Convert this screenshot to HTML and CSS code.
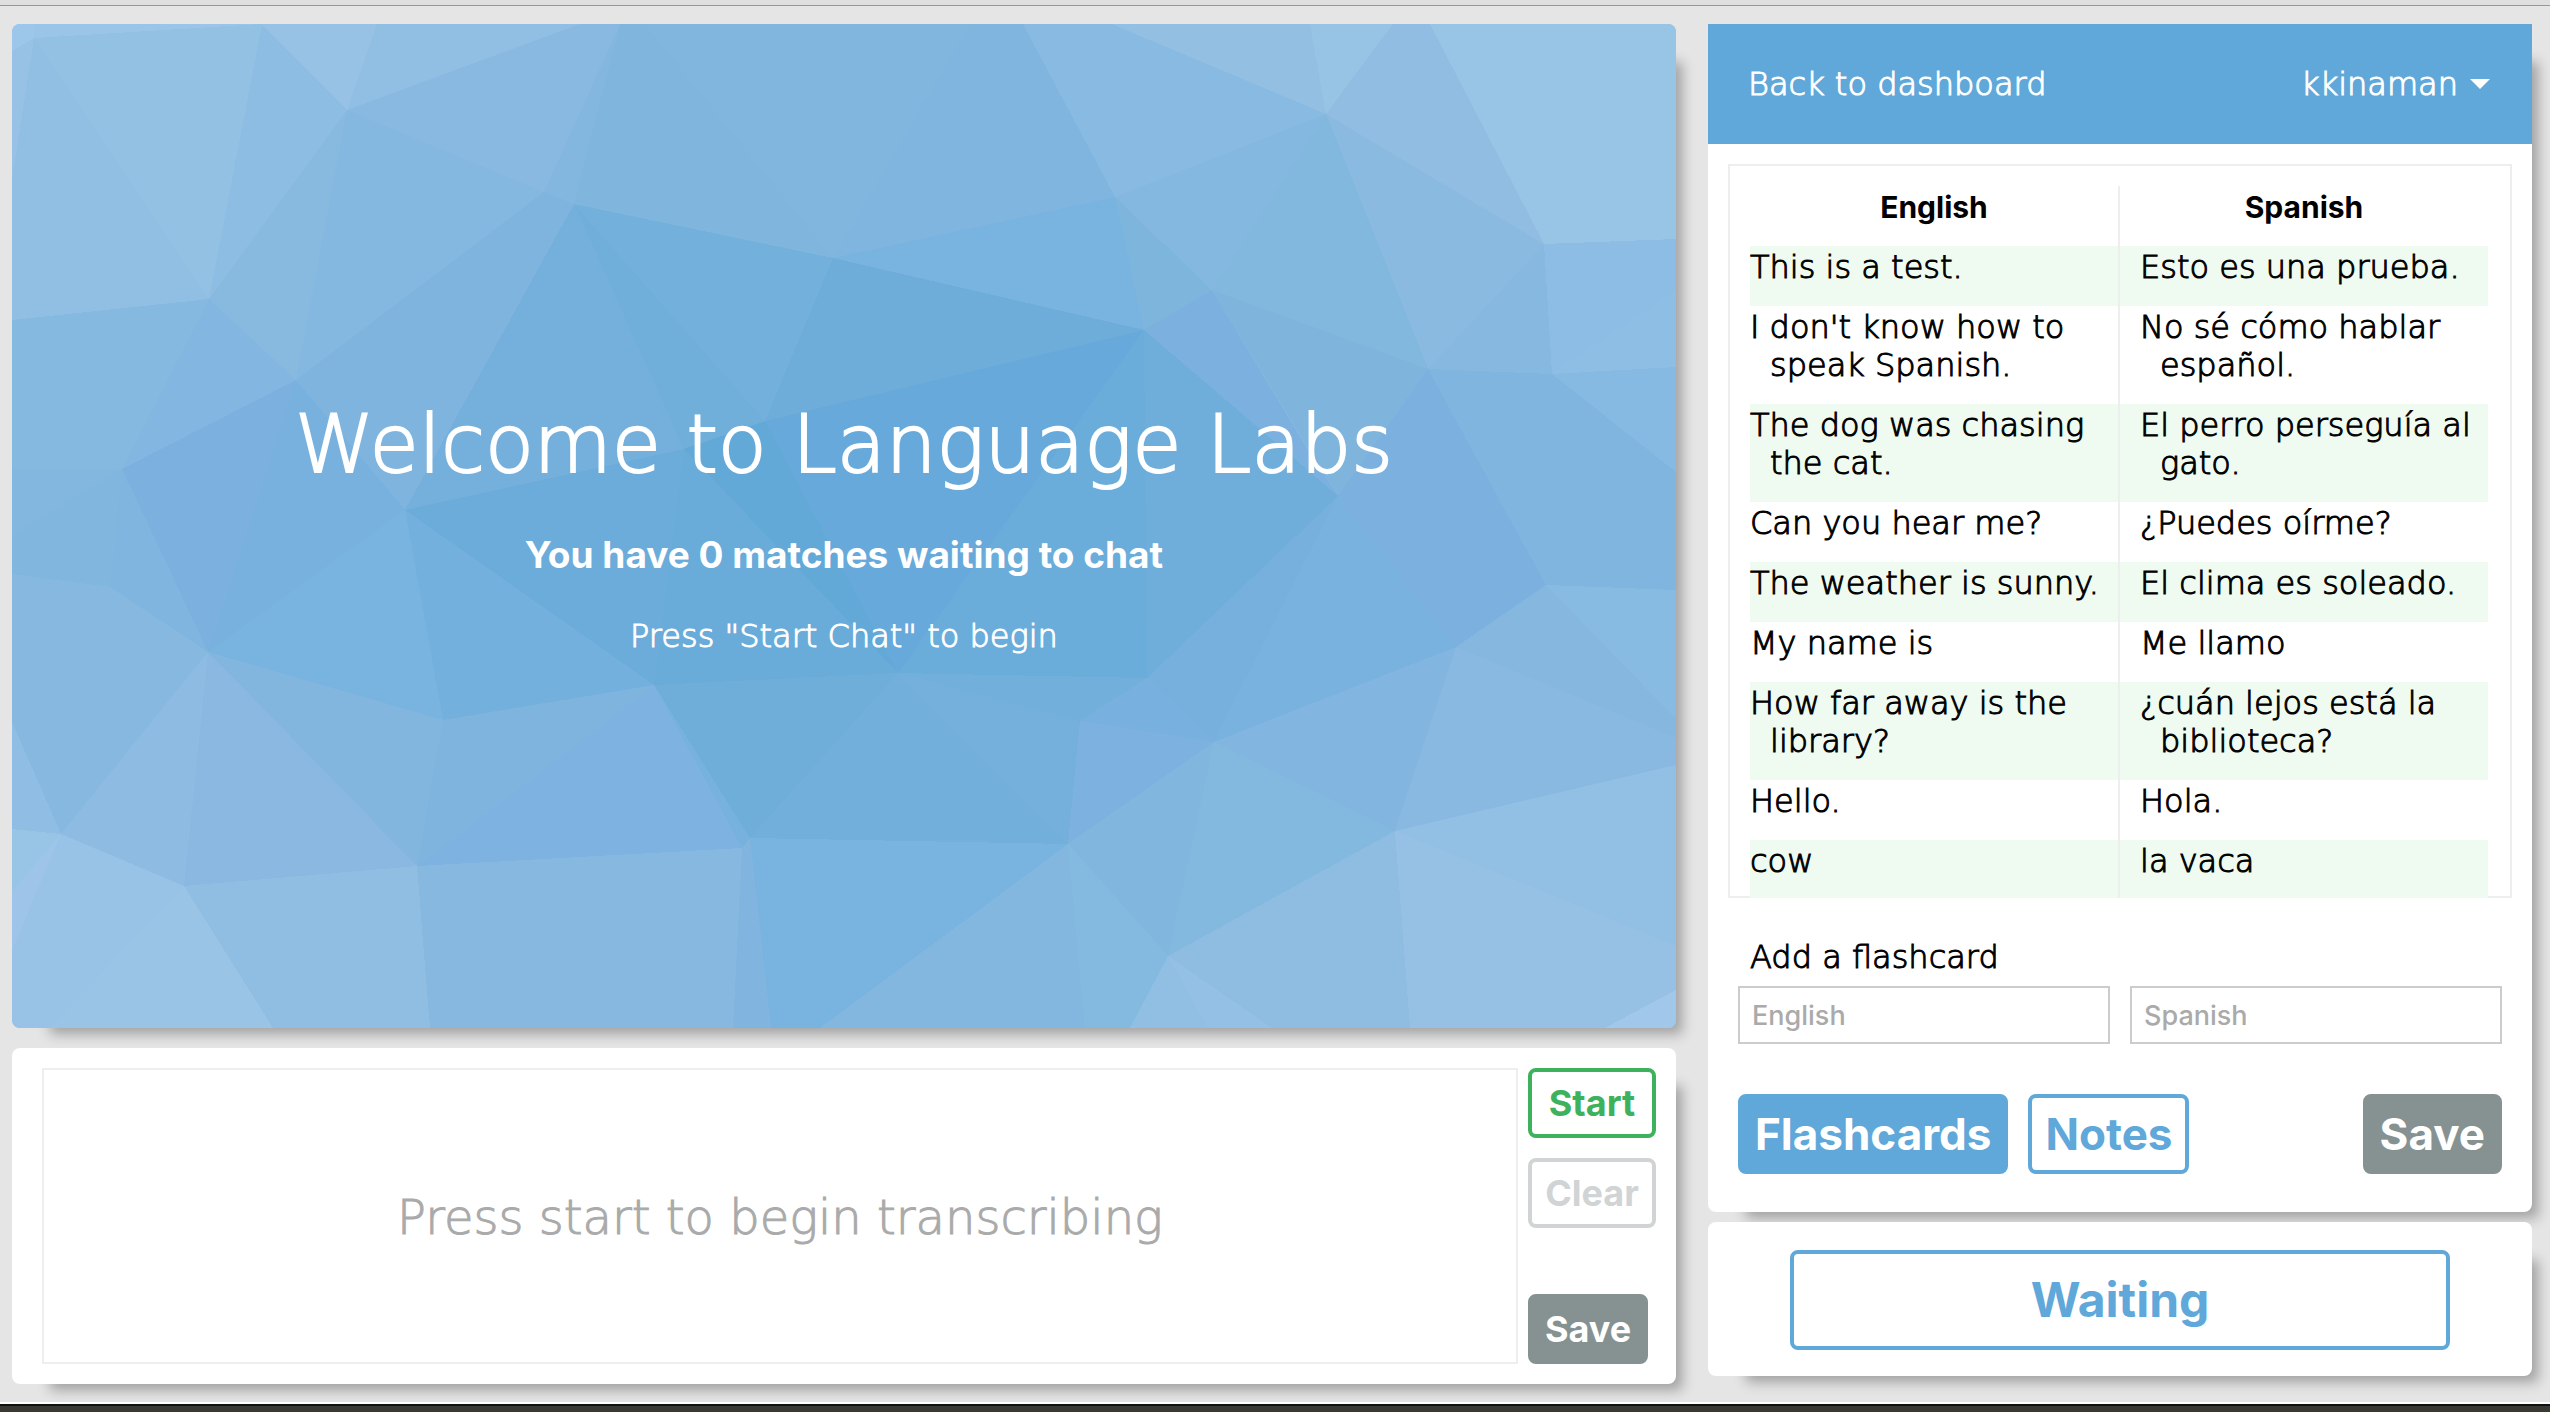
FILE: index.html
```html
<!DOCTYPE html>
<html lang="en">
<head>
<meta charset="utf-8">
<title>Language Labs</title>
<link rel="stylesheet" href="styles.css">
</head>
<body>
<div class="window">
  <div class="toolbar-edge"></div>
  <main class="layout">
    <div class="column column-left">
      <section class="card video">
        <svg class="mosaic" viewBox="12 24 1664 1004" preserveAspectRatio="none" aria-hidden="true" shape-rendering="crispEdges">
          <rect x="12" y="24" width="1664" height="1004" fill="#84b7df"/>
          <polygon fill="#9dc6eb" points="12,24 34,24 34,38 12,51"/>
          <polygon fill="#9ac4e8" points="34,24 262,24 34,38"/>
          <polygon fill="#93c1e3" points="34,38 262,24 209,299"/>
          <polygon fill="#91bee3" points="34,38 209,299 12,320 12,180"/>
          <polygon fill="#97c2e5" points="34,38 12,180 12,51"/>
          <polygon fill="#8ebde4" points="262,24 347,110 209,299"/>
          <polygon fill="#97c1e5" points="262,24 377,24 347,110"/>
          <polygon fill="#90bfe3" points="377,24 580,24 347,110"/>
          <polygon fill="#89b8e1" points="580,24 620,24 544,192 347,110"/>
          <polygon fill="#84b7df" points="620,24 574,204 544,192"/>
          <polygon fill="#88bae0" points="209,299 347,110 296,380"/>
          <polygon fill="#85b8e0" points="347,110 544,192 296,380"/>
          <polygon fill="#80b6de" points="620,24 645,24 833,258 574,204"/>
          <polygon fill="#81b6de" points="645,24 970,24 833,258"/>
          <polygon fill="#80b5e0" points="970,24 1023,24 1115,197 833,258"/>
          <polygon fill="#80b5de" points="620,24 833,258 574,204"/>
          <polygon fill="#88bae2" points="1023,24 1112,24 1326,114 1115,197"/>
          <polygon fill="#93bfe3" points="1112,24 1310,24 1326,114"/>
          <polygon fill="#97c3e4" points="1310,24 1393,24 1326,114"/>
          <polygon fill="#91bde3" points="1393,24 1430,24 1544,244 1326,114"/>
          <polygon fill="#98c4e6" points="1430,24 1676,24 1676,239 1544,244"/>
          <polygon fill="#84b8e0" points="1115,197 1326,114 1212,290"/>
          <polygon fill="#83b8de" points="1326,114 1428,369 1212,290"/>
          <polygon fill="#8abae0" points="1326,114 1544,244 1428,369"/>
          <polygon fill="#87b9e0" points="1544,244 1552,374 1428,369"/>
          <polygon fill="#8dbce4" points="1544,244 1676,239 1676,290 1552,374"/>
          <polygon fill="#8fbee4" points="1552,374 1676,290 1676,367"/>
          <polygon fill="#87bae2" points="1552,374 1676,367 1676,472"/>
          <polygon fill="#80b5df" points="1428,369 1552,374 1676,472 1676,590 1546,585"/>
          <polygon fill="#7cb0df" points="1428,369 1546,585 1456,647 1338,496"/>
          <polygon fill="#7fb4dd" points="1212,290 1428,369 1338,496"/>
          <polygon fill="#7cb0df" points="1144,330 1212,290 1308,450 1338,496"/>
          <polygon fill="#7eb5dd" points="1115,197 1212,290 1144,330"/>
          <polygon fill="#79b3df" points="833,258 1115,197 1144,330"/>
          <polygon fill="#6eadda" points="833,258 1144,330 765,421"/>
          <polygon fill="#74b0dc" points="574,204 833,258 765,421"/>
          <polygon fill="#71afdb" points="574,204 765,421 684,449"/>
          <polygon fill="#75b0dc" points="574,204 684,449 405,510"/>
          <polygon fill="#7eb4de" points="544,192 574,204 405,510 296,380"/>
          <polygon fill="#83b6e0" points="209,299 296,380 122,469"/>
          <polygon fill="#86b9e0" points="12,320 209,299 122,469 12,469"/>
          <polygon fill="#84b7df" points="12,469 122,469 12,535"/>
          <polygon fill="#81b6de" points="122,469 110,587 12,574 12,535"/>
          <polygon fill="#7fb5de" points="122,469 208,652 110,587"/>
          <polygon fill="#7cb0df" points="122,469 296,380 208,652"/>
          <polygon fill="#78b1dd" points="296,380 405,510 208,652"/>
          <polygon fill="#79b3df" points="405,510 443,720 208,652"/>
          <polygon fill="#74b0dd" points="405,510 654,685 443,720"/>
          <polygon fill="#6cacda" points="405,510 684,449 654,685"/>
          <polygon fill="#69abd9" points="684,449 898,673 654,685"/>
          <polygon fill="#62a9d8" points="684,449 765,421 898,673"/>
          <polygon fill="#67a9da" points="765,421 1144,330 898,673"/>
          <polygon fill="#6aacda" points="1144,330 1147,678 898,673"/>
          <polygon fill="#6faeda" points="1144,330 1338,496 1147,678"/>
          <polygon fill="#77b0dd" points="1338,496 1214,742 1147,678"/>
          <polygon fill="#79b2de" points="1338,496 1456,647 1214,742"/>
          <polygon fill="#87b9e0" points="12,574 110,587 208,652 61,834 12,722"/>
          <polygon fill="#8fbde3" points="12,722 61,834 12,829"/>
          <polygon fill="#8dbbe2" points="208,652 184,886 61,834"/>
          <polygon fill="#8ab8e0" points="208,652 417,866 184,886"/>
          <polygon fill="#82b6de" points="208,652 443,720 417,866"/>
          <polygon fill="#7fb4de" points="443,720 654,685 417,866"/>
          <polygon fill="#7eb2e0" points="654,685 742,848 417,866"/>
          <polygon fill="#77b2de" points="654,685 750,838 742,848"/>
          <polygon fill="#70aeda" points="654,685 898,673 750,838"/>
          <polygon fill="#73afdb" points="898,673 1068,844 750,838"/>
          <polygon fill="#75b0dc" points="898,673 1080,721 1068,844"/>
          <polygon fill="#72afda" points="898,673 1147,678 1080,721"/>
          <polygon fill="#78b1df" points="1147,678 1214,742 1080,721"/>
          <polygon fill="#7db1e0" points="1080,721 1214,742 1068,844"/>
          <polygon fill="#81b6de" points="1214,742 1168,956 1068,844"/>
          <polygon fill="#84b9df" points="1214,742 1395,831 1168,956"/>
          <polygon fill="#82b5e0" points="1214,742 1456,647 1395,831"/>
          <polygon fill="#89b8e1" points="1456,647 1676,738 1676,765 1395,831"/>
          <polygon fill="#86b8df" points="1456,647 1546,585 1676,719 1676,738"/>
          <polygon fill="#88bbe2" points="1546,585 1676,590 1676,719"/>
          <polygon fill="#92bfe4" points="1395,831 1676,765 1676,946"/>
          <polygon fill="#96c1e5" points="1395,831 1676,946 1676,990 1605,1028 1410,1028"/>
          <polygon fill="#a1c7ea" points="1676,990 1676,1028 1605,1028"/>
          <polygon fill="#8ebde1" points="1395,831 1410,1028 1272,1028 1168,956"/>
          <polygon fill="#95c0e5" points="1168,956 1272,1028 1208,1028"/>
          <polygon fill="#91bee3" points="1168,956 1208,1028 1130,1028"/>
          <polygon fill="#85bae0" points="1068,844 1168,956 1130,1028 1085,1028"/>
          <polygon fill="#84b7e0" points="1068,844 1085,1028 820,1028"/>
          <polygon fill="#79b3df" points="750,838 1068,844 820,1028 771,1028"/>
          <polygon fill="#82b4e0" points="742,848 750,838 771,1028 733,1028"/>
          <polygon fill="#86b8e0" points="417,866 742,848 733,1028 430,1028"/>
          <polygon fill="#8fbee2" points="184,886 417,866 430,1028 273,1028"/>
          <polygon fill="#99c4e6" points="184,886 273,1028 50,1028"/>
          <polygon fill="#98c2e6" points="61,834 184,886 50,1028 12,1028 12,950"/>
          <polygon fill="#9ec4e9" points="61,834 12,950 12,892"/>
          <polygon fill="#98c4e6" points="12,829 61,834 12,892"/>
        </svg>
        <div class="welcome">
          <h1>Welcome to Language Labs</h1>
          <p class="matches">You have 0 matches waiting to chat</p>
          <p class="hint">Press "Start Chat" to begin</p>
        </div>
      </section>
      <section class="card transcribe">
        <textarea class="transcript" aria-label="Transcript" placeholder="Press start to begin transcribing"></textarea>
        <div class="transcribe-actions">
          <button class="btn btn-small btn-start" type="button">Start</button>
          <button class="btn btn-small btn-clear" type="button" disabled>Clear</button>
          <button class="btn btn-small btn-save btn-bottom" type="button">Save</button>
        </div>
      </section>
    </div>

    <div class="column column-right">
      <section class="card study">
        <nav class="topbar">
          <a href="#dashboard">Back to dashboard</a>
          <a class="user" href="#user">kkinaman <svg class="caret" viewBox="0 0 20 10" aria-hidden="true"><path d="M0 0h20L10 10z" fill="currentColor"/></svg></a>
        </nav>
        <div class="deck">
          <table class="cards">
            <thead><tr><th scope="col">English</th><th scope="col">Spanish</th></tr></thead>
            <tbody>
              <tr><td>This is a test.</td><td>Esto es una prueba.</td></tr>
              <tr><td>I don't know how to speak Spanish.</td><td>No sé cómo hablar español.</td></tr>
              <tr><td>The dog was chasing the cat.</td><td>El perro perseguía al gato.</td></tr>
              <tr><td>Can you hear me?</td><td>¿Puedes oírme?</td></tr>
              <tr><td>The weather is sunny.</td><td>El clima es soleado.</td></tr>
              <tr><td>My name is</td><td>Me llamo</td></tr>
              <tr><td>How far away is the library?</td><td>¿cuán lejos está la biblioteca?</td></tr>
              <tr><td>Hello.</td><td>Hola.</td></tr>
              <tr><td>cow</td><td>la vaca</td></tr>
            </tbody>
          </table>
        </div>
        <form class="add">
          <h2>Add a flashcard</h2>
          <div class="fields">
            <input type="text" aria-label="English" placeholder="English">
            <input type="text" aria-label="Spanish" placeholder="Spanish">
          </div>
          <div class="tabs">
            <button class="btn btn-large btn-active" type="button">Flashcards</button>
            <button class="btn btn-large btn-outline" type="button">Notes</button>
            <button class="btn btn-large btn-save btn-end" type="button">Save</button>
          </div>
        </form>
      </section>
      <section class="card status">
        <button class="btn btn-waiting" type="button">Waiting</button>
      </section>
    </div>
  </main>
  <div class="desktop-edge"></div>
</div>
</body>
</html>
```
FILE: styles.css
```css
:root {
  --blue: #5fa8d9;
  --green: #3db15b;
  --grey: #869291;
  --line: #eeeeee;
  --thin: "DejaVu Sans Light", "DejaVu Sans", sans-serif;
  --bold: Inter, "Open Sans", sans-serif;
}

* {
  box-sizing: border-box;
}

body {
  margin: 0;
  background: #e5e5e5;
  color: #000;
  font-family: var(--thin);
  font-weight: 200;
  font-size: 32px;
  line-height: 38px;
}

h1, h2, p {
  margin: 0;
  font-weight: 200;
}

a {
  color: inherit;
  text-decoration: none;
}

.window {
  display: flex;
  flex-direction: column;
  min-height: 100vh;
}

.toolbar-edge {
  height: 6px;
  background: #dfdfdf;
  border-bottom: 1px solid #979797;
}

.layout {
  flex: 1;
  display: grid;
  grid-template-columns: minmax(0, 208fr) minmax(0, 103fr);
  gap: 32px;
  padding: 18px 18px 18px 12px;
}

.desktop-edge {
  height: 10px;
  background: #3a3934;
  border-top: 2px solid #fff;
  box-shadow: inset 0 2px 0 #111;
}

.column {
  display: flex;
  flex-direction: column;
}

.column-left {
  gap: 20px;
}

.column-right {
  gap: 10px;
  padding-bottom: 8px;
}

.card {
  background: #fff;
  border-radius: 8px;
  box-shadow: 22px 22px 12px -16px rgba(0, 0, 0, 0.3);
}

/* Video area */

.video {
  flex: 1;
  display: grid;
}

.mosaic,
.welcome {
  grid-area: 1 / 1;
}

.mosaic {
  width: 100%;
  height: 100%;
  border-radius: 8px;
}

.welcome {
  z-index: 1;
  align-self: center;
  display: flex;
  flex-direction: column;
  align-items: center;
  gap: 42px;
  color: #fff;
  text-align: center;
}

h1 {
  font-size: 80px;
  line-height: 96px;
  -webkit-text-stroke: 2px currentColor;
}

.matches {
  font: 700 37px/40px var(--bold);
}

.hint {
  -webkit-text-stroke: 1px currentColor;
}

/* Transcription */

.transcribe {
  display: flex;
  gap: 10px;
  height: 336px;
  padding: 20px 20px 20px 30px;
}

.transcript {
  flex: 1;
  min-width: 0;
  border: 2px solid var(--line);
  padding: 119px 20px 0;
  background: #fff;
  font: 200 48px/56px var(--thin);
  text-align: center;
  resize: none;
}

.transcript::placeholder {
  color: #aaa;
  -webkit-text-stroke: 1px currentColor;
}

.transcribe-actions {
  display: flex;
  flex-direction: column;
  align-items: flex-start;
  gap: 20px;
  width: 128px;
}

/* Buttons */

.btn {
  border: 4px solid transparent;
  border-radius: 8px;
  padding: 0;
  background: #fff;
  font: 700 36px/40px var(--bold);
}

.btn-small {
  width: 128px;
  height: 70px;
}

.btn-start {
  border-color: var(--green);
  color: var(--green);
}

.btn-clear {
  border-color: #d0d4d5;
  color: #d0d4d5;
}

.btn-save {
  border-color: var(--grey);
  background: var(--grey);
  color: #fff;
}

.btn-bottom {
  width: 120px;
  margin-top: auto;
}

.btn-large {
  height: 80px;
  padding: 0 13px;
  font-size: 44px;
}

.btn-active {
  border-color: var(--blue);
  background: var(--blue);
  color: #fff;
}

.btn-outline,
.btn-waiting {
  border-color: var(--blue);
  color: var(--blue);
}

.btn-end {
  margin-left: auto;
}

/* Flashcards */

.study {
  flex: 1;
}

.topbar {
  display: flex;
  align-items: center;
  justify-content: space-between;
  height: 120px;
  padding: 0 42px 0 40px;
  background: var(--blue);
  color: #fff;
  -webkit-text-stroke: 1px currentColor;
}

.user {
  display: flex;
  align-items: center;
  gap: 12px;
}

.caret {
  width: 20px;
  height: 10px;
}

.deck {
  margin: 20px 20px 0;
  border: 2px solid var(--line);
  padding: 20px 22px 0 20px;
}

.cards {
  width: 100%;
  margin-bottom: -2px;
  border-collapse: collapse;
  table-layout: fixed;
}

.cards th {
  padding: 2px 0 20px;
  font: 700 30px/38px var(--bold);
}

.cards td {
  padding: 2px 0 20px 20px;
  text-indent: -20px;
  vertical-align: top;
  -webkit-text-stroke: 1px currentColor;
}

.cards th + th,
.cards td + td {
  border-left: 2px solid var(--line);
}

.cards td + td {
  padding-left: 40px;
}

.cards tbody tr:nth-child(odd) {
  background: #effaf0;
}

.cards tbody tr:last-child td {
  padding-bottom: 18px;
}

.add {
  padding: 40px 30px 38px;
}

h2 {
  padding: 0 12px;
  font-size: 32px;
  -webkit-text-stroke: 1px currentColor;
}

.fields {
  display: flex;
  gap: 20px;
  margin-top: 10px;
}

.fields input {
  flex: 1;
  min-width: 0;
  height: 58px;
  border: 2px solid #ccc;
  padding: 0 12px;
  font: 500 27px/32px var(--bold);
}

.fields input::placeholder {
  color: #aaa;
}

.tabs {
  display: flex;
  gap: 20px;
  margin-top: 50px;
}

/* Chat status */

.status {
  display: flex;
  justify-content: center;
  padding: 28px 0 26px;
}

.btn-waiting {
  width: 80%;
  height: 100px;
  font-size: 48px;
}
```
